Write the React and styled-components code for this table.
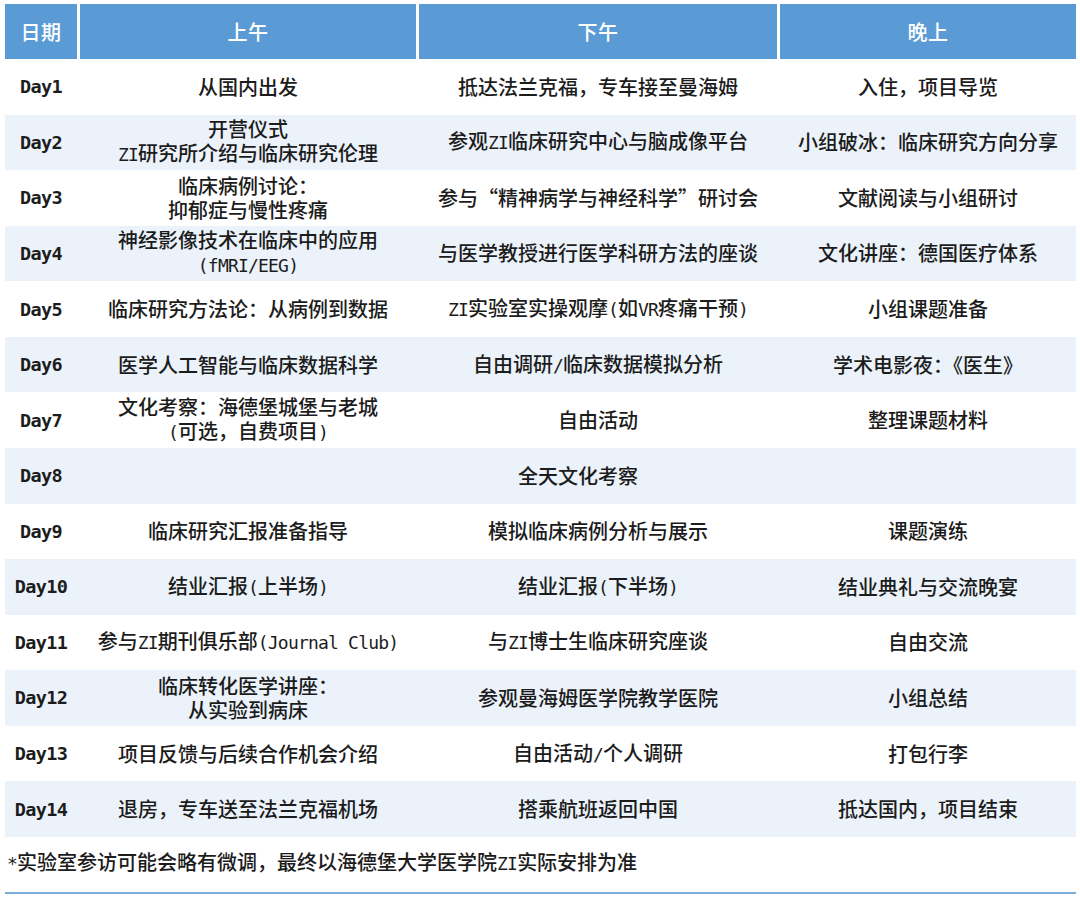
import React from "react";
import styled, { createGlobalStyle } from "styled-components";

const Global = createGlobalStyle`
  html, body { margin: 0; padding: 0; background: #ffffff; }
  body { font-family: "Noto Sans CJK SC", "Noto Sans", sans-serif; }
`;

const COLS = "72px 336px 358px 296px";

const Page = styled.div`
  width: 1071px;
  padding: 4px 0 0 5px;
`;

const HeaderRow = styled.div`
  display: grid;
  grid-template-columns: ${COLS};
  column-gap: 3px;
  height: 55px;
`;

const HeadCell = styled.div`
  background: #5b9bd5;
  color: #ffffff;
  display: flex;
  align-items: center;
  justify-content: center;
  font-size: 20px;
  font-weight: 500;
  letter-spacing: 0.5px;
`;

const BodyRow = styled.div`
  display: grid;
  grid-template-columns: ${COLS};
  column-gap: 3px;
  height: 55.57px;
  background: ${(p) => (p.$shade ? "#ebf2fa" : "#ffffff")};
`;

const Cell = styled.div`
  grid-column: ${(p) => (p.$span ? "2 / 5" : "auto")};
  display: flex;
  flex-direction: column;
  align-items: center;
  justify-content: center;
  text-align: center;
  font-size: 20px;
  font-weight: 500;
  line-height: 24px;
  color: #1c1c1c;
  white-space: nowrap;
`;

const DayCell = styled.div`
  display: flex;
  align-items: center;
  justify-content: center;
  font-family: "DejaVu Sans Mono", "Liberation Mono", monospace;
  font-weight: 700;
  font-size: 18.5px;
  letter-spacing: -0.6px;
  color: #1c1c1c;
`;

const Mono = styled.span`
  font-family: "DejaVu Sans Mono", "Liberation Mono", monospace;
  font-size: 18px;
  font-weight: 400;
  letter-spacing: -0.8px;
  white-space: pre;
`;

const Note = styled.p`
  margin: 13px 0 0 2px;
  font-size: 20px;
  font-weight: 500;
  line-height: 24px;
  color: #1c1c1c;
`;

const Rule = styled.div`
  margin-top: 16px;
  height: 2px;
  background: #7aaddc;
`;

function Text({ children }) {
  const parts = children.split(/([\x20-\x7e]+)/).filter(Boolean);
  return (
    <span>
      {parts.map((p, i) =>
        /^[\x20-\x7e]+$/.test(p) ? <Mono key={i}>{p}</Mono> : <React.Fragment key={i}>{p}</React.Fragment>
      )}
    </span>
  );
}

const rows = [
  ["Day1", ["从国内出发"], ["抵达法兰克福，专车接至曼海姆"], ["入住，项目导览"]],
  ["Day2", ["开营仪式", "ZI研究所介绍与临床研究伦理"], ["参观ZI临床研究中心与脑成像平台"], ["小组破冰：临床研究方向分享"]],
  ["Day3", ["临床病例讨论：", "抑郁症与慢性疼痛"], ["参与“精神病学与神经科学”研讨会"], ["文献阅读与小组研讨"]],
  ["Day4", ["神经影像技术在临床中的应用", "(fMRI/EEG)"], ["与医学教授进行医学科研方法的座谈"], ["文化讲座：德国医疗体系"]],
  ["Day5", ["临床研究方法论：从病例到数据"], ["ZI实验室实操观摩(如VR疼痛干预)"], ["小组课题准备"]],
  ["Day6", ["医学人工智能与临床数据科学"], ["自由调研/临床数据模拟分析"], ["学术电影夜：《医生》"]],
  ["Day7", ["文化考察：海德堡城堡与老城", "(可选，自费项目)"], ["自由活动"], ["整理课题材料"]],
  ["Day8", ["全天文化考察"]],
  ["Day9", ["临床研究汇报准备指导"], ["模拟临床病例分析与展示"], ["课题演练"]],
  ["Day10", ["结业汇报(上半场)"], ["结业汇报(下半场)"], ["结业典礼与交流晚宴"]],
  ["Day11", ["参与ZI期刊俱乐部(Journal Club)"], ["与ZI博士生临床研究座谈"], ["自由交流"]],
  ["Day12", ["临床转化医学讲座：", "从实验到病床"], ["参观曼海姆医学院教学医院"], ["小组总结"]],
  ["Day13", ["项目反馈与后续合作机会介绍"], ["自由活动/个人调研"], ["打包行李"]],
  ["Day14", ["退房，专车送至法兰克福机场"], ["搭乘航班返回中国"], ["抵达国内，项目结束"]],
];

function Lines({ lines }) {
  return lines.map((l, i) => <Text key={i}>{l}</Text>);
}

export default function App() {
  return (
    <Page>
      <Global />
      <HeaderRow>
        <HeadCell>日期</HeadCell>
        <HeadCell>上午</HeadCell>
        <HeadCell>下午</HeadCell>
        <HeadCell>晚上</HeadCell>
      </HeaderRow>
      {rows.map(([day, ...cells], i) => (
        <BodyRow key={day} $shade={i % 2 === 1}>
          <DayCell>{day}</DayCell>
          {cells.length === 1 ? (
            <Cell $span>
              <Lines lines={cells[0]} />
            </Cell>
          ) : (
            cells.map((c, j) => (
              <Cell key={j}>
                <Lines lines={c} />
              </Cell>
            ))
          )}
        </BodyRow>
      ))}
      <Note>
        <Text>*实验室参访可能会略有微调，最终以海德堡大学医学院ZI实际安排为准</Text>
      </Note>
      <Rule />
    </Page>
  );
}
